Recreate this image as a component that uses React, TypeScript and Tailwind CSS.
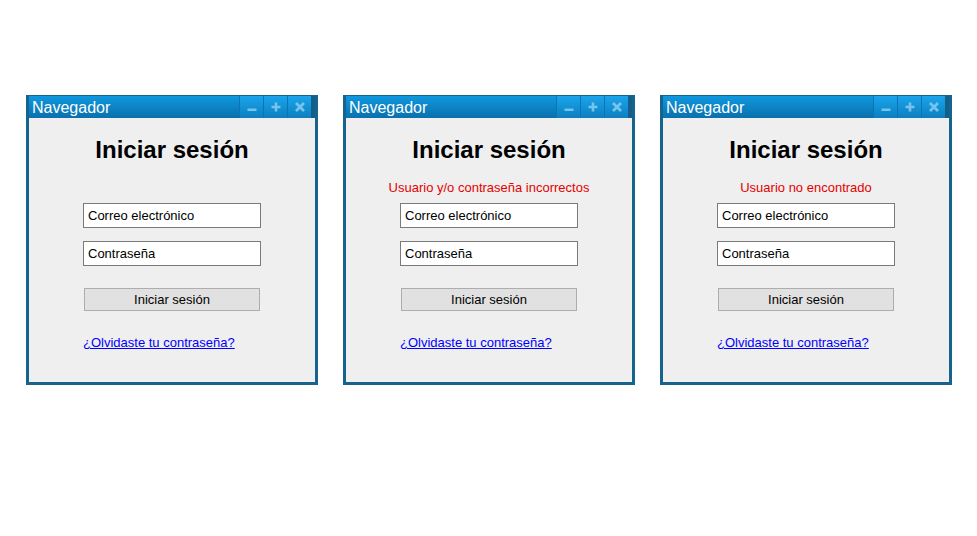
import React from 'react';

const font = { fontFamily: '"Liberation Sans", Arial, sans-serif' };

function TitleButton({ kind }: { kind: 'min' | 'max' | 'close' }) {
  return (
    <div className="flex h-full w-[24px] items-center justify-center border-l border-[#0b74b5] bg-gradient-to-b from-[#1ba4ec] to-[#0c7fc0]">
      <svg width="12" height="12" viewBox="0 0 12 12" className="opacity-80">
        {kind === 'min' && <rect x="1.5" y="7.5" width="9" height="2.5" fill="#8fd0f3" />}
        {kind === 'max' && (
          <path d="M6 1.5v9M1.5 6h9" stroke="#8fd0f3" strokeWidth="2.6" />
        )}
        {kind === 'close' && (
          <path d="M2 2l8 8M10 2l-8 8" stroke="#8fd0f3" strokeWidth="2.8" />
        )}
      </svg>
    </div>
  );
}

function LoginWindow({ error }: { error?: string }) {
  return (
    <div className="flex h-[290px] w-[292px] flex-col bg-[#16638d] px-[3px] pb-[3px] pt-px">
      <div className="flex h-[22px] items-center bg-gradient-to-b from-[#0f98e0] to-[#0a70ac] pl-[3px]">
        <span className="mt-[2px] flex-1 text-[16px] leading-none text-white">Navegador</span>
        <TitleButton kind="min" />
        <TitleButton kind="max" />
        <TitleButton kind="close" />
        <div className="h-full w-[4px] bg-[#135f8a]" />
      </div>
      <div className="flex flex-1 flex-col items-center bg-[#efefef]">
        <h1 className="mt-[18px] h-[28px] text-[24px] font-bold leading-[28px] text-black">
          Iniciar sesión
        </h1>
        <div className="mt-[16px] h-[16px] text-[13px] leading-[16px] text-[#e60000]">
          {error ?? ''}
        </div>
        <div className="mt-[7px] flex h-[25px] w-[178px] items-center border border-[#7a7a7a] bg-white pl-[4px] text-[13px] text-black">
          Correo electrónico
        </div>
        <div className="mt-[13px] flex h-[25px] w-[178px] items-center border border-[#7a7a7a] bg-white pl-[4px] text-[13px] text-black">
          Contraseña
        </div>
        <button className="mt-[22px] h-[23px] w-[176px] border border-[#adadad] bg-[#e1e1e1] text-[13px] text-black">
          Iniciar sesión
        </button>
        <div className="mt-[19px] w-[178px]">
          <a href="#" className="text-[13px] leading-[16px] text-[#0000ff] underline">
            ¿Olvidaste tu contraseña?
          </a>
        </div>
      </div>
    </div>
  );
}

export default function App() {
  return (
    <div className="h-[536px] w-[977px] bg-white" style={font}>
      <div className="flex gap-[25px] pl-[26px] pt-[95px]">
        <LoginWindow />
        <LoginWindow error="Usuario y/o contraseña incorrectos" />
        <LoginWindow error="Usuario no encontrado" />
      </div>
    </div>
  );
}
